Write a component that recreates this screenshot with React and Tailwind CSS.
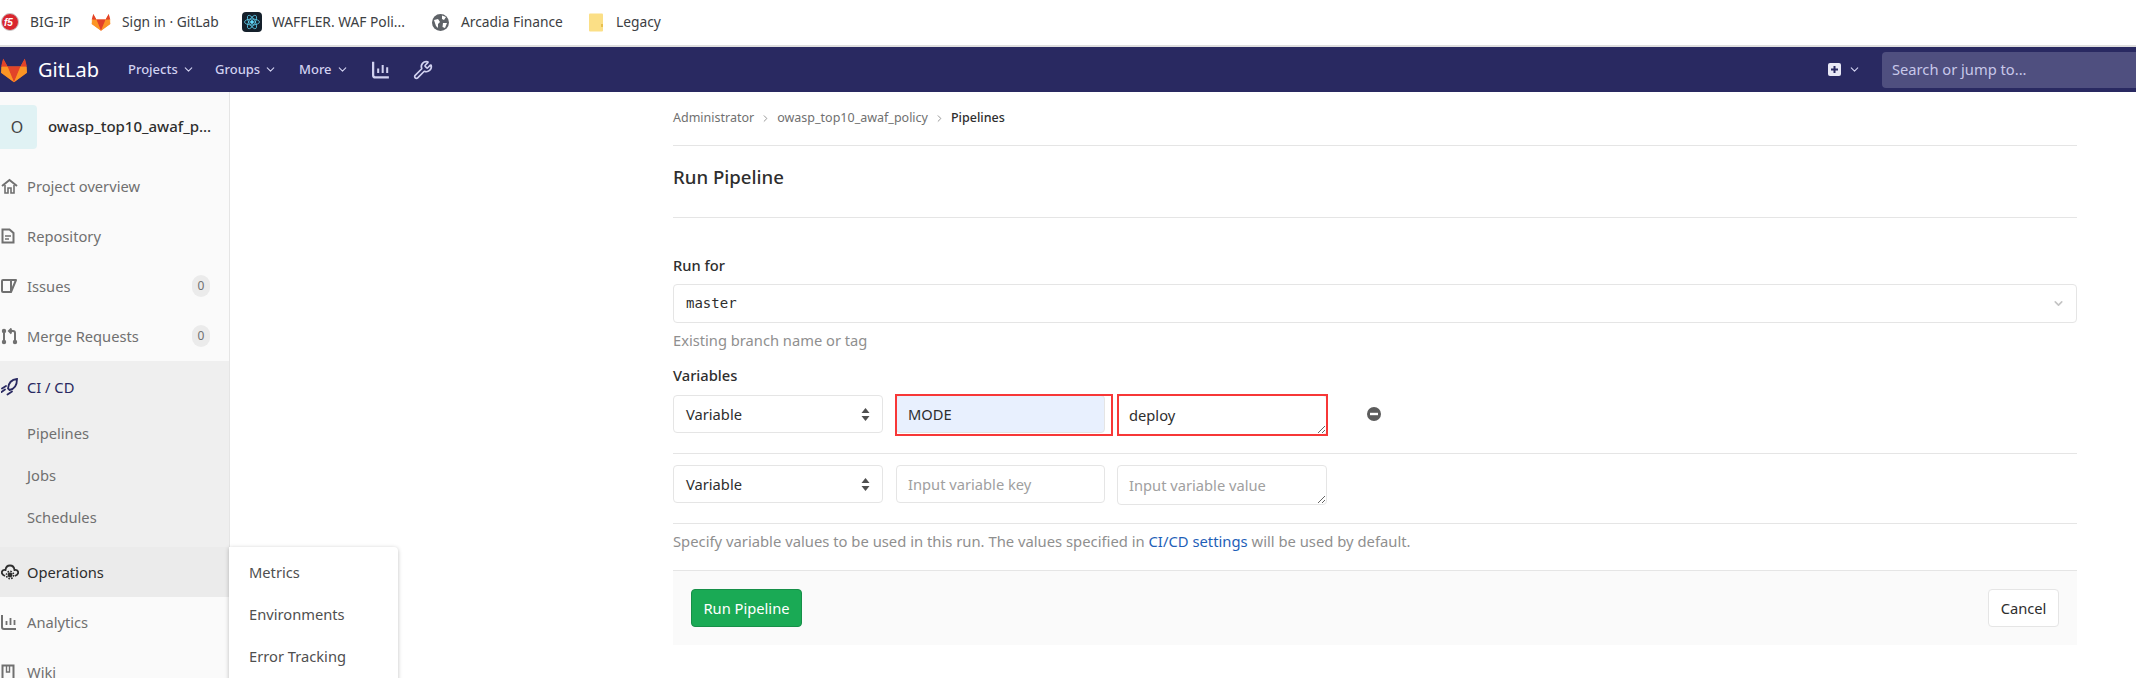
import React from "react";
import { ChevronDown, ChevronRight, Wrench } from "lucide-react";

const font = { fontFamily: '"Noto Sans", sans-serif' };

const F5Icon = () => (
    <svg width="18" height="18" viewBox="0 0 18 18">
        <circle cx="9" cy="9" r="8.5" fill="#d9262e" stroke="#c9c9c9" />
        <text x="3" y="13" fontSize="10" fontWeight="700" fontStyle="italic" fill="#fff" fontFamily="Liberation Sans, sans-serif">f5</text>
    </svg>
);

const Tanuki = ({ size = 20 }) => (
    <svg width={size} height={size} viewBox="0 0 32 32">
        <path d="M16 30 L1.2 19.2 L3.6 3 L8.6 12 L23.4 12 L28.4 3 L30.8 19.2 Z" fill="#fc6d26" />
        <path d="M16 30 L8.6 12 L23.4 12 Z" fill="#e24329" />
        <path d="M16 30 L8.6 12 L1.2 12 L1.2 19.2 Z" fill="#fca326" opacity="0.75" />
        <path d="M16 30 L23.4 12 L30.8 12 L30.8 19.2 Z" fill="#fca326" opacity="0.75" />
        <path d="M1.2 12 L3.6 3 L8.6 12 Z" fill="#e24329" />
        <path d="M30.8 12 L28.4 3 L23.4 12 Z" fill="#e24329" />
    </svg>
);

const ReactIcon = () => (
    <div className="w-5 h-5 bg-[#15202b] rounded-sm flex items-center justify-center">
        <svg width="18" height="18" viewBox="-12 -12 24 24" fill="none" stroke="#61dafb" strokeWidth="1">
            <circle r="2" fill="#61dafb" />
            <ellipse rx="10" ry="4" />
            <ellipse rx="10" ry="4" transform="rotate(60)" />
            <ellipse rx="10" ry="4" transform="rotate(120)" />
        </svg>
    </div>
);

const GlobeIcon = () => (
    <svg width="17" height="17" viewBox="0 0 17 17">
        <circle cx="8.5" cy="8.5" r="8.5" fill="#5f6368" />
        <path d="M2 6 L6 5 L8 8 L6 10 L6 14 L4 12 Z M10 1.5 L14 3 L12 6 L10 5 Z M11 9 L15 9 L13 14 L10.5 13 Z" fill="#fff" />
    </svg>
);

const FolderIcon = () => (
    <svg width="16" height="19" viewBox="0 0 16 19">
        <path d="M1 1.5 Q1 0.5 2 0.5 L14 0.5 Q15 0.5 15 1.5 L15 17.5 Q15 18.5 14 18.5 L2 18.5 Q1 18.5 1 17.5 Z" fill="#fbdf86" />
        <rect x="13" y="11" width="2" height="3" fill="#e8c04f" />
    </svg>
);

const HomeIcon = () => (
    <svg width="17" height="16" viewBox="0 0 17 16" fill="none" stroke="#707070" strokeWidth="2">
        <path d="M1 8 L8.5 2 L16 8" />
        <path d="M4 7 L4 15 L7 15 L7 10 L10 10 L10 15 L13 15 L13 7" strokeWidth="1.6" />
    </svg>
);

const DocIcon = () => (
    <svg width="14" height="16" viewBox="0 0 14 16" fill="none" stroke="#707070" strokeWidth="2">
        <path d="M1.5 1.5 L8.5 1.5 L12.5 5 L12.5 14.5 L1.5 14.5 Z" />
        <path d="M4 8 L10 8 M4 11 L8 11" strokeWidth="1.5" />
    </svg>
);

const IssueIcon = () => (
    <svg width="16" height="16" viewBox="0 0 16 16" fill="none" stroke="#707070" strokeWidth="2">
        <path d="M10 2 L2 2 Q1 2 1 3 L1 13 Q1 14 2 14 L10 14" />
        <path d="M10 2 L15 2 L10 14 Z" strokeLinejoin="round" />
    </svg>
);

const MergeIcon = () => (
    <svg width="17" height="17" viewBox="0 0 17 17" fill="none" stroke="#707070" strokeWidth="2">
        <path d="M3 3 L3 14" />
        <circle cx="3" cy="3" r="1.2" fill="#707070" />
        <circle cx="3" cy="14" r="1.2" fill="#707070" />
        <circle cx="14" cy="14" r="1.2" fill="#707070" />
        <path d="M14 14 L14 5 Q14 3 12 3 L8 3 M10.5 0.5 L8 3 L10.5 5.5" />
    </svg>
);

const RocketIcon = () => (
    <svg width="17" height="18" viewBox="0 0 17 18" fill="none" stroke="#292961" strokeWidth="1.8" strokeLinecap="round">
        <path d="M16 1 C10.5 1.5 7.5 5 7 10.5 L8.5 12 C13.5 11 16 7 16 1 Z" />
        <path d="M1 10.5 L5 8 M6.5 16.5 L11 13.5 M0.5 14 L4 11.5" />
    </svg>
);

const OpsIcon = () => (
    <svg width="18" height="17" viewBox="0 0 18 17" fill="none" stroke="#2e2e2e" strokeWidth="1.8">
        <path d="M4 12 Q0 10 1 7.5 Q2 5.5 4.5 6 Q5 1.5 9 1.5 Q13 1.5 13.5 6 Q16 5.5 17 7.5 Q18 10 14 12" />
        <circle cx="9" cy="11" r="2.4" fill="#2e2e2e" stroke="none" />
        <circle cx="9" cy="11" r="3.6" strokeDasharray="1.6 1.2" strokeWidth="1.6" />
    </svg>
);

const ChartIcon = ({ color = "#707070", w = 16, h = 16 }) => (
    <svg width={w} height={h} viewBox="0 0 16 16" fill="none" stroke={color} strokeWidth="2">
        <path d="M1 1 L1 13 Q1 15 3 15 L15 15" />
        <path d="M5.5 7 L5.5 11 M9.5 4 L9.5 11 M13.5 6 L13.5 11" strokeWidth="1.8" />
    </svg>
);

const BookIcon = () => (
    <svg width="14" height="16" viewBox="0 0 14 16" fill="none" stroke="#707070" strokeWidth="2">
        <path d="M1.5 15 L1.5 1.5 L12.5 1.5 L12.5 15" />
        <path d="M5.5 1.5 L5.5 8 L8.5 8 L8.5 1.5" strokeWidth="1.4" />
    </svg>
);

const SortArrows = () => (
    <svg width="9" height="15" viewBox="0 0 9 15" fill="#4f4f4f">
        <path d="M4.5 1 L8.5 6 L0.5 6 Z" />
        <path d="M4.5 14 L8.5 9 L0.5 9 Z" />
    </svg>
);

const Crumb = () => <ChevronRight size={11} className="mx-[6px] text-[#8f8f8f]" />;

const Bookmark = ({ icon, label, className }) => (
    <div className={`flex items-center ${className}`}>
        {icon}
        <span className="text-[13.8px] text-[#3c4043]">{label}</span>
    </div>
);

const NavLink = ({ label, className }) => (
    <div className={`flex items-center ${className}`}>
        <span className="text-[13px] font-medium text-[#d1d1f0]">{label}</span>
        <ChevronDown size={13} className="ml-[4px] text-[#d1d1f0]" />
    </div>
);

const SideItem = ({ icon, label, badge, className = "text-[#707070]" }) => (
    <div className={`h-[50px] flex items-center text-[14.7px] relative ${className}`}>
        <div className="w-[27px] pl-[1px] flex items-center shrink-0">{icon}</div>
        <span>{label}</span>
        {badge !== undefined && (
            <span className="ml-auto mr-[19px] w-[18px] h-[22px] rounded-full bg-[#ebebeb] text-[#707070] text-[12px] flex items-center justify-center">{badge}</span>
        )}
    </div>
);

const fieldClass = "border border-[#e5e5e5] rounded text-[14.7px] pl-[11px] pr-3 outline-none placeholder:text-[#a0a0a0]";

const VariableSelect = () => (
    <div className="w-[210px] h-[38px] border border-[#e5e5e5] rounded px-3 flex items-center justify-between text-[14.7px] text-[#2e2e2e] shrink-0">
        <span>Variable</span>
        <SortArrows />
    </div>
);

export default function App() {
    return (
        <div className="w-[2136px] h-[678px] overflow-hidden bg-white flex flex-col" style={font}>
            {/* Bookmarks */}
            <div className="h-[47px] shrink-0 border-b-2 border-[#dedede] flex items-center pb-[1px]">
                <Bookmark className="ml-[1px] w-[90px] gap-[11px]" icon={<F5Icon />} label="BIG-IP" />
                <Bookmark className="w-[151px] gap-[11px]" icon={<Tanuki />} label="Sign in · GitLab" />
                <Bookmark className="w-[190px] gap-[10px]" icon={<ReactIcon />} label="WAFFLER. WAF Poli..." />
                <Bookmark className="w-[156px] gap-[12px]" icon={<GlobeIcon />} label="Arcadia Finance" />
                <Bookmark className="gap-[12px]" icon={<FolderIcon />} label="Legacy" />
            </div>

            {/* Top nav */}
            <header className="h-[45px] shrink-0 bg-[#292961] flex items-center">
                <div className="flex items-center w-[128px]">
                    <Tanuki size={28} />
                    <span className="ml-[10px] text-[20px] text-white">GitLab</span>
                </div>
                <NavLink label="Projects" className="w-[87px]" />
                <NavLink label="Groups" className="w-[84px]" />
                <NavLink label="More" className="w-[73px]" />
                <ChartIcon color="#d1d1f0" w={18} h={19} />
                <Wrench size={20} className="ml-[23px] text-[#d1d1f0]" />
                <div className="ml-auto flex items-center">
                    <svg width="13" height="13" viewBox="0 0 13 13">
                        <rect width="13" height="13" rx="2" fill="#e8e8f5" />
                        <path d="M6.5 3 L6.5 10 M3 6.5 L10 6.5" stroke="#292961" strokeWidth="2" />
                    </svg>
                    <ChevronDown size={13} className="ml-[7px] text-[#d1d1f0]" />
                    <div className="ml-[21px] w-[254px] h-[36px] bg-[#4f4f7f] rounded-l flex items-center pl-[10px] text-[14.7px] text-[#c8c8ea]">Search or jump to...</div>
                </div>
            </header>

            <div className="flex-1 flex min-h-0 relative">
                {/* Sidebar */}
                <aside className="w-[230px] shrink-0 bg-[#fafafa] border-r border-[#e5e5e5] overflow-hidden">
                    <div className="h-[69px] flex items-center">
                        <div className="w-[37px] h-[44px] bg-[#e0f2f4] rounded-r flex items-center justify-center text-[16px] text-[#444] pr-[3px]">O</div>
                        <span className="ml-[11px] text-[15px] font-medium text-[#2e2e2e] whitespace-nowrap">owasp_top10_awaf_p...</span>
                    </div>
                    <SideItem icon={<HomeIcon />} label="Project overview" />
                    <SideItem icon={<DocIcon />} label="Repository" />
                    <SideItem icon={<IssueIcon />} label="Issues" badge="0" />
                    <SideItem icon={<MergeIcon />} label="Merge Requests" badge="0" />
                    <div className="bg-[#efefef] h-[186px] pt-[1px]">
                        <SideItem icon={<RocketIcon />} label="CI / CD" className="text-[#292961]" />
                        <div className="text-[14.7px] text-[#707070] pl-[27px]">
                            <div className="h-[42px] flex items-center">Pipelines</div>
                            <div className="h-[42px] flex items-center">Jobs</div>
                            <div className="h-[42px] flex items-center">Schedules</div>
                        </div>
                    </div>
                    <SideItem icon={<OpsIcon />} label="Operations" className="text-[#2e2e2e] bg-[#ebebeb]" />
                    <SideItem icon={<ChartIcon />} label="Analytics" />
                    <SideItem icon={<BookIcon />} label="Wiki" />
                </aside>

                {/* Flyout menu */}
                <div className="absolute left-[229px] top-[455px] w-[169px] h-[140px] bg-white rounded-tr shadow-[0_1px_4px_rgba(0,0,0,0.25)] pl-[20px] text-[14.7px] text-[#4f4f4f] pt-[5px]">
                    <div className="h-[41px] flex items-center">Metrics</div>
                    <div className="h-[42px] flex items-center">Environments</div>
                    <div className="h-[42px] flex items-center">Error Tracking</div>
                </div>

                {/* Main */}
                <main className="flex-1 pl-[443px] pr-[59px] text-[#2e2e2e]">
                    <div className="h-[54px] border-b border-[#e5e5e5] flex items-center pb-[1px] text-[12.5px] text-[#707070]">
                        <span>Administrator</span>
                        <Crumb />
                        <span>owasp_top10_awaf_policy</span>
                        <Crumb />
                        <span className="font-medium text-[#2e2e2e]">Pipelines</span>
                    </div>
                    <div className="h-[72px] border-b border-[#e5e5e5] flex items-center pb-[10px]">
                        <h1 className="text-[18.6px] font-medium">Run Pipeline</h1>
                    </div>
                    <div className="mt-[37px] h-[20px] flex items-center text-[14.7px] font-medium">Run for</div>
                    <div className="mt-[9px] h-[39px] border border-[#e5e5e5] rounded flex items-center justify-between px-3">
                        <span className="text-[14px] text-[#2e2e2e]" style={{ fontFamily: '"DejaVu Sans Mono", monospace' }}>master</span>
                        <ChevronDown size={13} strokeWidth={3} className="text-[#c4c4c4] -mr-[1px]" />
                    </div>
                    <div className="mt-[7px] h-[20px] flex items-center text-[14.7px] text-[#8f8f8f]">Existing branch name or tag</div>
                    <div className="mt-[15px] h-[20px] flex items-center text-[14.7px] font-medium">Variables</div>

                    <div className="mt-[10px] pb-[20px] border-b border-[#e5e5e5] flex items-start h-[59px]">
                        <VariableSelect />
                        <div className="relative ml-[13px]">
                            <input readOnly value="MODE" className={`${fieldClass} block w-[209px] h-[38px] bg-[#e8f0fe] text-[#2e2e2e]`} />
                            <div className="absolute -left-[1px] -top-[1px] w-[218px] h-[42px] border-2 border-[#f73737]" />
                        </div>
                        <div className="relative ml-[12px]">
                            <textarea readOnly rows={1} value="deploy" className={`${fieldClass} block w-[210px] h-[40px] py-2 text-[#2e2e2e]`} />
                            <div className="absolute left-0 -top-[1px] w-[211px] h-[42px] border-2 border-[#f73737]" />
                        </div>
                        <svg width="14" height="14" viewBox="0 0 14 14" className="ml-[40px] mt-[12px]">
                            <circle cx="7" cy="7" r="7" fill="#5c5c5c" />
                            <rect x="3" y="5.8" width="8" height="2.4" fill="#fff" />
                        </svg>
                    </div>

                    <div className="pt-[11px] h-[70px] border-b border-[#e5e5e5] flex items-start">
                        <VariableSelect />
                        <input readOnly placeholder="Input variable key" className={`${fieldClass} block ml-[13px] w-[209px] h-[38px]`} />
                        <textarea readOnly rows={1} placeholder="Input variable value" className={`${fieldClass} block ml-[12px] w-[210px] h-[40px] py-2`} />
                    </div>

                    <div className="h-[46px] flex items-start pt-[6px] text-[14.8px] text-[#8f8f8f]">
                        <p>Specify variable values to be used in this run. The values specified in <span className="text-[#1f5fb8]">CI/CD settings</span> will be used by default.</p>
                    </div>

                    <div className="h-[75px] bg-[#fafafa] border-t border-[#e5e5e5] flex items-center justify-between px-[18px]">
                        <button className="w-[111px] h-[38px] bg-[#1aaa55] border border-[#168f48] rounded text-[14.7px] text-white">Run Pipeline</button>
                        <button className="w-[71px] h-[38px] bg-white border border-[#e5e5e5] rounded text-[14.7px] text-[#2e2e2e]">Cancel</button>
                    </div>
                </main>
            </div>
        </div>
    );
}
